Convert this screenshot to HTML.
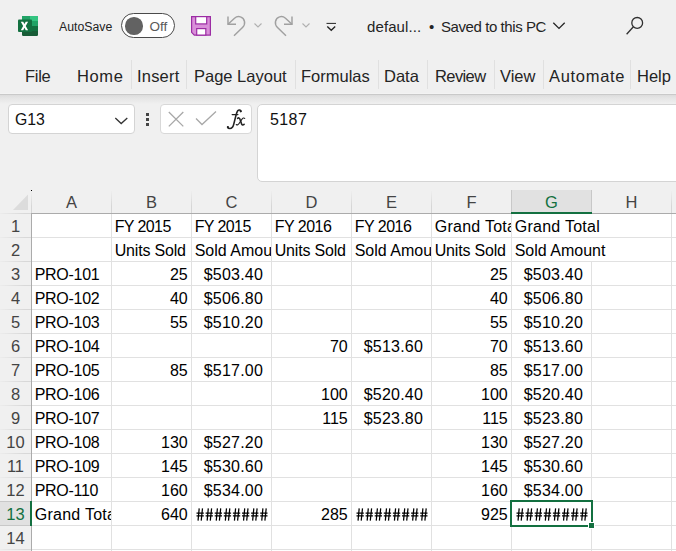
<!DOCTYPE html><html><head><meta charset="utf-8"><style>
*{margin:0;padding:0;box-sizing:border-box}
html,body{width:676px;height:551px;overflow:hidden}
body{position:relative;background:#f0f0f0;font-family:"Liberation Sans",sans-serif;color:#000}
.a{position:absolute;white-space:nowrap}
.tab{position:absolute;top:66px;font-size:16.5px;color:#242424;line-height:20px}
.sep{position:absolute;top:60px;width:1px;height:29px;background:#e0e0e0}
.cell{position:absolute;height:23px;overflow:hidden;font-size:16px;line-height:26px;white-space:nowrap}
.l{text-align:left;padding-left:3px}
.r{text-align:right}
.ch{position:absolute;top:190px;height:23px;font-size:16.5px;line-height:24.5px;text-align:center;color:#444}
.rh{position:absolute;left:0;width:31px;height:23px;font-size:16.5px;line-height:24.5px;text-align:center;color:#444}
</style></head><body>


<svg class="a" style="left:17px;top:15px" width="23" height="22" viewBox="0 0 23 22">
 <rect x="5" y="1" width="16" height="20" rx="1.2" fill="#185c37"/>
 <rect x="5" y="1" width="16" height="5" fill="#21a366"/>
 <rect x="13" y="1" width="8" height="5" fill="#33c481"/>
 <rect x="5" y="6" width="16" height="5" fill="#137040"/>
 <rect x="13" y="6" width="8" height="5" fill="#21a366"/>
 <rect x="5" y="11" width="16" height="5" fill="#185c37"/>
 <rect x="13" y="11" width="8" height="5" fill="#137040"/>
 <rect x="1" y="4.5" width="14" height="12.5" rx="1" fill="#137040"/>
 <path d="M3.8 6.7 L6.2 6.7 L7.45 9.1 L8.7 6.7 L11.1 6.7 L8.75 10.95 L11.1 15.2 L8.7 15.2 L7.45 12.8 L6.2 15.2 L3.8 15.2 L6.15 10.95 Z" fill="#fff"/>
</svg>
<div class="a" style="left:59px;top:19px;font-size:12.3px;line-height:16px;color:#242424">AutoSave</div>
<div class="a" style="left:121px;top:13px;width:54px;height:25px;background:#fff;border:1.2px solid #4a4a4a;border-radius:13px"></div>
<div class="a" style="left:125.2px;top:17.3px;width:17.4px;height:17.4px;border-radius:50%;background:#626262"></div>
<div class="a" style="left:149.5px;top:18.5px;font-size:13.5px;line-height:16px;color:#5a5a5a">Off</div>
<svg class="a" style="left:190px;top:15px" width="22" height="22" viewBox="0 0 22 22">
 <path d="M1.6 1.6 H20.4 V20.1 H4.3 L1.6 17.3 Z" fill="#d98fd9" stroke="#9c2da4" stroke-width="1.2"/>
 <rect x="5.7" y="1.6" width="11" height="7.3" fill="#fff" stroke="#9c2da4" stroke-width="1.2"/>
 <rect x="6.7" y="13.6" width="9.1" height="6.5" fill="#fff" stroke="#9c2da4" stroke-width="1.2"/>
</svg>
<svg class="a" style="left:224px;top:14px" width="24" height="24" viewBox="0 0 24 24" fill="none" stroke="#a0a0a0" stroke-width="1.45">
 <path d="M4 2.5 V10.3 H12"/>
 <path d="M4 10.3 L10.5 4.2 C14 1.2 19.5 2.5 20.5 7.5 C21 10 20 12 18.5 13.5 L10 21.8"/>
</svg>
<svg class="a" style="left:252.5px;top:21.3px" width="10" height="8" viewBox="0 0 10 8" fill="none" stroke="#b0b0b0" stroke-width="1.1"><path d="M1.5 2.5 L5 6 L8.5 2.5"/></svg>
<svg class="a" style="left:272px;top:14px" width="24" height="24" viewBox="0 0 24 24" fill="none" stroke="#a0a0a0" stroke-width="1.45">
 <path d="M20 2.5 V10.3 H12"/>
 <path d="M20 10.3 L13.5 4.2 C10 1.2 4.5 2.5 3.5 7.5 C3 10 4 12 5.5 13.5 L14 21.8"/>
</svg>
<svg class="a" style="left:300.5px;top:21.3px" width="10" height="8" viewBox="0 0 10 8" fill="none" stroke="#b0b0b0" stroke-width="1.1"><path d="M1.5 2.5 L5 6 L8.5 2.5"/></svg>
<svg class="a" style="left:324px;top:20px" width="14" height="14" viewBox="0 0 14 14" fill="none" stroke="#242424" stroke-width="1.2"><path d="M2.5 3.4 H12" stroke-width="1"/><path d="M3.3 6.5 L7.25 10.2 L11.2 6.5" stroke-width="1.4"/></svg>
<div class="a" style="left:367px;top:18.5px;font-size:15px;line-height:16px;color:#242424;letter-spacing:0.1px">defaul...</div>
<div class="a" style="left:429px;top:18.5px;font-size:15px;line-height:16px;color:#242424">&#8226;</div>
<div class="a" style="left:441px;top:18.5px;font-size:15px;line-height:16px;color:#242424;letter-spacing:-0.42px">Saved to this PC</div>
<svg class="a" style="left:552px;top:21px" width="14" height="10" viewBox="0 0 14 10" fill="none" stroke="#242424" stroke-width="1.3"><path d="M1.3 1.7 L7 7.4 L12.7 1.7"/></svg>
<svg class="a" style="left:624px;top:14px" width="22" height="22" viewBox="0 0 22 22" fill="none" stroke="#303030" stroke-width="1.3">
 <circle cx="13.2" cy="8.9" r="5.4"/><path d="M9.4 12.7 L2.6 20.3"/>
</svg>

<div class="tab" style="left:25px;letter-spacing:-0.3px">File</div>
<div class="tab" style="left:77px;letter-spacing:0.6px">Home</div>
<div class="tab" style="left:137px;letter-spacing:0.2px">Insert</div>
<div class="tab" style="left:194px;letter-spacing:0px">Page Layout</div>
<div class="tab" style="left:301px;letter-spacing:0px">Formulas</div>
<div class="tab" style="left:384px;letter-spacing:0px">Data</div>
<div class="tab" style="left:435px;letter-spacing:-0.6px">Review</div>
<div class="tab" style="left:500px;letter-spacing:0px">View</div>
<div class="tab" style="left:549px;letter-spacing:0.7px">Automate</div>
<div class="tab" style="left:637px;letter-spacing:0px">Help</div>
<div class="sep" style="left:131px"></div>
<div class="sep" style="left:186px"></div>
<div class="sep" style="left:295px"></div>
<div class="sep" style="left:378px"></div>
<div class="sep" style="left:427px"></div>
<div class="sep" style="left:494px"></div>
<div class="sep" style="left:543px"></div>
<div class="sep" style="left:630px"></div>
<div class="a" style="left:0;top:93px;width:676px;height:1px;background:#f3f3f3"></div>
<div class="a" style="left:0;top:94px;width:676px;height:1px;background:#c9c9c9"></div>
<div class="a" style="left:0;top:95px;width:676px;height:9px;background:linear-gradient(#dcdcdc,#e4e4e4 30%,#f0f0f0)"></div>

<div class="a" style="left:8px;top:104px;width:127px;height:30px;background:#fff;border:1px solid #d4d4d4;border-radius:4px"></div>
<div class="a" style="left:15px;top:111.5px;font-size:15.8px;line-height:16px;color:#111">G13</div>
<svg class="a" style="left:113px;top:114px" width="16" height="12" viewBox="0 0 16 12" fill="none" stroke="#333" stroke-width="1.3"><path d="M2.3 4.1 L8.2 9.6 L14.3 4.1"/></svg>
<div class="a" style="left:146px;top:113px;width:3px;height:3px;background:#444"></div>
<div class="a" style="left:146px;top:118px;width:3px;height:3px;background:#444"></div>
<div class="a" style="left:146px;top:123px;width:3px;height:3px;background:#444"></div>
<div class="a" style="left:160px;top:104px;width:92px;height:30px;background:#fff;border:1px solid #d8d8d8;border-radius:4px"></div>
<svg class="a" style="left:166px;top:110px" width="20" height="20" viewBox="0 0 20 20" fill="none" stroke="#a8a8a8" stroke-width="1.3"><path d="M2.8 2 L17.3 16.4 M17.3 2 L2.8 16.4"/></svg>
<svg class="a" style="left:194px;top:110px" width="24" height="18" viewBox="0 0 24 18" fill="none" stroke="#a8a8a8" stroke-width="1.3"><path d="M2 8.5 L8 14.5 L22 1.5"/></svg>
<svg class="a" style="left:222px;top:104px" width="30" height="30" viewBox="0 0 30 30" fill="none" stroke="#222" stroke-linecap="round">
 <path d="M18.9 7.2 C18.6 5.8 16.8 5.5 15.7 6.8 C14.9 7.9 14.4 9.6 13.9 11.6 L11.7 20.4 C11 23.3 9.7 24.5 7.9 24.5 C6.7 24.5 5.9 24 5.7 23.2" stroke-width="1.6"/>
 <circle cx="18.7" cy="7.3" r="1.1" fill="#222" stroke="none"/>
 <circle cx="5.9" cy="23.1" r="1.1" fill="#222" stroke="none"/>
 <path d="M10.2 10.6 H15.9" stroke-width="1.3"/>
 <path d="M15.6 14.3 C16.8 13.4 17.7 14.2 18.1 15.5 L19.6 19.9 C20 21.1 20.9 21.3 22.1 20.3" stroke-width="1.6"/>
 <path d="M22.7 14.4 C21.9 13.6 20.9 13.9 19.9 15.3 L16.9 19.8 C16.1 21 15.1 21.2 14.3 20.5" stroke-width="1.15"/>
</svg>
<div class="a" style="left:257px;top:104px;width:440px;height:78px;background:#fff;border:1px solid #d4d4d4;border-radius:5px"></div>
<div class="a" style="left:270px;top:111.5px;font-size:16px;line-height:16px;color:#111;letter-spacing:0.4px">5187</div>

<div class="a" style="left:32px;top:214px;width:644px;height:337px;background:#fff"></div>
<svg class="a" style="left:0;top:190px" width="31" height="23"><path d="M13 20 L28 20 L28 4.5 Z" fill="#dcdcdc"/></svg>
<div class="a" style="left:31px;top:190px;width:1px;height:1px;background:#000"></div>
<div class="a" style="left:111px;top:190px;width:1px;height:23px;background:linear-gradient(#f0f0f0,#d6d6d6 70%)"></div>
<div class="a" style="left:191px;top:190px;width:1px;height:23px;background:linear-gradient(#f0f0f0,#d6d6d6 70%)"></div>
<div class="a" style="left:271px;top:190px;width:1px;height:23px;background:linear-gradient(#f0f0f0,#d6d6d6 70%)"></div>
<div class="a" style="left:351px;top:190px;width:1px;height:23px;background:linear-gradient(#f0f0f0,#d6d6d6 70%)"></div>
<div class="a" style="left:431px;top:190px;width:1px;height:23px;background:linear-gradient(#f0f0f0,#d6d6d6 70%)"></div>
<div class="a" style="left:511px;top:190px;width:1px;height:23px;background:linear-gradient(#f0f0f0,#d6d6d6 70%)"></div>
<div class="a" style="left:591px;top:190px;width:1px;height:23px;background:linear-gradient(#f0f0f0,#d6d6d6 70%)"></div>
<div class="a" style="left:671px;top:190px;width:1px;height:23px;background:linear-gradient(#f0f0f0,#d6d6d6 70%)"></div>
<div class="a" style="left:511px;top:190px;width:81px;height:24px;background:#e1e1e1;border-left:1px solid #c8c8c8;border-right:1px solid #c8c8c8"></div>
<div class="a" style="left:511px;top:212px;width:81px;height:2px;background:#137040"></div>
<div class="a" style="left:0;top:213px;width:31px;height:1px;background:linear-gradient(90deg,#ececec,#d8d8d8 80%)"></div>
<div class="a" style="left:31px;top:213px;width:480px;height:1px;background:#ababab"></div>
<div class="a" style="left:592px;top:213px;width:84px;height:1px;background:#ababab"></div>
<div class="a" style="left:31px;top:191px;width:1px;height:22px;background:linear-gradient(#f0f0f0,#d6d6d6 70%)"></div>
<div class="a" style="left:31px;top:213px;width:1px;height:338px;background:#ababab"></div>
<div class="ch" style="left:32px;width:79px;color:#444">A</div>
<div class="ch" style="left:112px;width:79px;color:#444">B</div>
<div class="ch" style="left:192px;width:79px;color:#444">C</div>
<div class="ch" style="left:272px;width:79px;color:#444">D</div>
<div class="ch" style="left:352px;width:79px;color:#444">E</div>
<div class="ch" style="left:432px;width:79px;color:#444">F</div>
<div class="ch" style="left:512px;width:79px;color:#137040">G</div>
<div class="ch" style="left:592px;width:79px;color:#444">H</div>
<div class="a" style="left:32px;top:237px;width:644px;height:1px;background:#e1e1e1"></div>
<div class="a" style="left:0;top:237px;width:31px;height:1px;background:linear-gradient(90deg,#ececec,#d8d8d8 80%)"></div>
<div class="a" style="left:32px;top:261px;width:644px;height:1px;background:#e1e1e1"></div>
<div class="a" style="left:0;top:261px;width:31px;height:1px;background:linear-gradient(90deg,#ececec,#d8d8d8 80%)"></div>
<div class="a" style="left:32px;top:285px;width:644px;height:1px;background:#e1e1e1"></div>
<div class="a" style="left:0;top:285px;width:31px;height:1px;background:linear-gradient(90deg,#ececec,#d8d8d8 80%)"></div>
<div class="a" style="left:32px;top:309px;width:644px;height:1px;background:#e1e1e1"></div>
<div class="a" style="left:0;top:309px;width:31px;height:1px;background:linear-gradient(90deg,#ececec,#d8d8d8 80%)"></div>
<div class="a" style="left:32px;top:333px;width:644px;height:1px;background:#e1e1e1"></div>
<div class="a" style="left:0;top:333px;width:31px;height:1px;background:linear-gradient(90deg,#ececec,#d8d8d8 80%)"></div>
<div class="a" style="left:32px;top:357px;width:644px;height:1px;background:#e1e1e1"></div>
<div class="a" style="left:0;top:357px;width:31px;height:1px;background:linear-gradient(90deg,#ececec,#d8d8d8 80%)"></div>
<div class="a" style="left:32px;top:381px;width:644px;height:1px;background:#e1e1e1"></div>
<div class="a" style="left:0;top:381px;width:31px;height:1px;background:linear-gradient(90deg,#ececec,#d8d8d8 80%)"></div>
<div class="a" style="left:32px;top:405px;width:644px;height:1px;background:#e1e1e1"></div>
<div class="a" style="left:0;top:405px;width:31px;height:1px;background:linear-gradient(90deg,#ececec,#d8d8d8 80%)"></div>
<div class="a" style="left:32px;top:429px;width:644px;height:1px;background:#e1e1e1"></div>
<div class="a" style="left:0;top:429px;width:31px;height:1px;background:linear-gradient(90deg,#ececec,#d8d8d8 80%)"></div>
<div class="a" style="left:32px;top:453px;width:644px;height:1px;background:#e1e1e1"></div>
<div class="a" style="left:0;top:453px;width:31px;height:1px;background:linear-gradient(90deg,#ececec,#d8d8d8 80%)"></div>
<div class="a" style="left:32px;top:477px;width:644px;height:1px;background:#e1e1e1"></div>
<div class="a" style="left:0;top:477px;width:31px;height:1px;background:linear-gradient(90deg,#ececec,#d8d8d8 80%)"></div>
<div class="a" style="left:32px;top:501px;width:644px;height:1px;background:#e1e1e1"></div>
<div class="a" style="left:0;top:501px;width:31px;height:1px;background:linear-gradient(90deg,#ececec,#d8d8d8 80%)"></div>
<div class="a" style="left:32px;top:525px;width:644px;height:1px;background:#e1e1e1"></div>
<div class="a" style="left:0;top:525px;width:31px;height:1px;background:linear-gradient(90deg,#ececec,#d8d8d8 80%)"></div>
<div class="a" style="left:32px;top:549px;width:644px;height:1px;background:#e1e1e1"></div>
<div class="a" style="left:0;top:549px;width:31px;height:1px;background:linear-gradient(90deg,#ececec,#d8d8d8 80%)"></div>
<div class="a" style="left:111px;top:214px;width:1px;height:337px;background:#e1e1e1"></div>
<div class="a" style="left:191px;top:214px;width:1px;height:337px;background:#e1e1e1"></div>
<div class="a" style="left:271px;top:214px;width:1px;height:337px;background:#e1e1e1"></div>
<div class="a" style="left:351px;top:214px;width:1px;height:337px;background:#e1e1e1"></div>
<div class="a" style="left:431px;top:214px;width:1px;height:337px;background:#e1e1e1"></div>
<div class="a" style="left:511px;top:214px;width:1px;height:337px;background:#e1e1e1"></div>
<div class="a" style="left:591px;top:262px;width:1px;height:289px;background:#e1e1e1"></div>
<div class="a" style="left:671px;top:214px;width:1px;height:337px;background:#e1e1e1"></div>
<div class="a" style="left:0;top:501px;width:31px;height:25px;background:#e1e1e1;border-top:1px solid #c8c8c8;border-bottom:1px solid #c8c8c8"></div>
<div class="a" style="left:30px;top:501px;width:2px;height:25px;background:#137040"></div>
<div class="rh" style="top:214px;color:#444">1</div>
<div class="rh" style="top:238px;color:#444">2</div>
<div class="rh" style="top:262px;color:#444">3</div>
<div class="rh" style="top:286px;color:#444">4</div>
<div class="rh" style="top:310px;color:#444">5</div>
<div class="rh" style="top:334px;color:#444">6</div>
<div class="rh" style="top:358px;color:#444">7</div>
<div class="rh" style="top:382px;color:#444">8</div>
<div class="rh" style="top:406px;color:#444">9</div>
<div class="rh" style="top:430px;color:#444">10</div>
<div class="rh" style="top:454px;color:#444">11</div>
<div class="rh" style="top:478px;color:#444">12</div>
<div class="rh" style="top:502px;color:#137040">13</div>
<div class="rh" style="top:526px;color:#444">14</div>
<div class="cell l" style="left:112px;top:214px;width:79px;padding-left:2.7px;letter-spacing:-0.6px">FY 2015</div>
<div class="cell l" style="left:192px;top:214px;width:79px;padding-left:2.7px;letter-spacing:-0.6px">FY 2015</div>
<div class="cell l" style="left:272px;top:214px;width:79px;padding-left:2.7px;letter-spacing:-0.5px">FY 2016</div>
<div class="cell l" style="left:352px;top:214px;width:79px;padding-left:2.7px;letter-spacing:-0.5px">FY 2016</div>
<div class="cell l" style="left:432px;top:214px;width:79px;padding-left:2.7px;letter-spacing:0.27px">Grand Total</div>
<div class="cell l" style="left:512px;top:214px;width:159px;padding-left:2.7px;letter-spacing:0.27px">Grand Total</div>
<div class="cell l" style="left:112px;top:238px;width:79px;padding-left:2.7px;letter-spacing:-0.18px">Units Sold</div>
<div class="cell l" style="left:192px;top:238px;width:79px;padding-left:2.7px;letter-spacing:0px">Sold Amount</div>
<div class="cell l" style="left:272px;top:238px;width:79px;padding-left:2.7px;letter-spacing:-0.18px">Units Sold</div>
<div class="cell l" style="left:352px;top:238px;width:79px;padding-left:2.7px;letter-spacing:0px">Sold Amount</div>
<div class="cell l" style="left:432px;top:238px;width:79px;padding-left:2.7px;letter-spacing:-0.18px">Units Sold</div>
<div class="cell l" style="left:512px;top:238px;width:159px;padding-left:2.7px;letter-spacing:0px">Sold Amount</div>
<div class="cell l" style="left:32px;top:502px;width:79px;padding-left:2.7px;letter-spacing:0.27px">Grand Total</div>
<div class="cell r" style="left:112px;top:502px;width:79px;padding-right:3.3px;letter-spacing:0px">640</div>
<svg class="a" style="left:196.2px;top:501.79999999999995px" width="75" height="23"><g transform="translate(0,6.40)"><path d="M3.20 0 L2.05 12.2 M6.50 0 L5.20 12.2 M0.50 4.6 H7.80 M0.50 7.4 H7.80 M12.30 0 L11.15 12.2 M15.60 0 L14.30 12.2 M9.60 4.6 H16.90 M9.60 7.4 H16.90 M21.40 0 L20.25 12.2 M24.70 0 L23.40 12.2 M18.70 4.6 H26.00 M18.70 7.4 H26.00 M30.50 0 L29.35 12.2 M33.80 0 L32.50 12.2 M27.80 4.6 H35.10 M27.80 7.4 H35.10 M39.60 0 L38.45 12.2 M42.90 0 L41.60 12.2 M36.90 4.6 H44.20 M36.90 7.4 H44.20 M48.70 0 L47.55 12.2 M52.00 0 L50.70 12.2 M46.00 4.6 H53.30 M46.00 7.4 H53.30 M57.80 0 L56.65 12.2 M61.10 0 L59.80 12.2 M55.10 4.6 H62.40 M55.10 7.4 H62.40 M66.90 0 L65.75 12.2 M70.20 0 L68.90 12.2 M64.20 4.6 H71.50 M64.20 7.4 H71.50 " stroke="#000" stroke-width="1.25" fill="none"/></g></svg>
<div class="cell r" style="left:272px;top:502px;width:79px;padding-right:3.3px;letter-spacing:0px">285</div>
<svg class="a" style="left:356.2px;top:501.79999999999995px" width="75" height="23"><g transform="translate(0,6.40)"><path d="M3.20 0 L2.05 12.2 M6.50 0 L5.20 12.2 M0.50 4.6 H7.80 M0.50 7.4 H7.80 M12.30 0 L11.15 12.2 M15.60 0 L14.30 12.2 M9.60 4.6 H16.90 M9.60 7.4 H16.90 M21.40 0 L20.25 12.2 M24.70 0 L23.40 12.2 M18.70 4.6 H26.00 M18.70 7.4 H26.00 M30.50 0 L29.35 12.2 M33.80 0 L32.50 12.2 M27.80 4.6 H35.10 M27.80 7.4 H35.10 M39.60 0 L38.45 12.2 M42.90 0 L41.60 12.2 M36.90 4.6 H44.20 M36.90 7.4 H44.20 M48.70 0 L47.55 12.2 M52.00 0 L50.70 12.2 M46.00 4.6 H53.30 M46.00 7.4 H53.30 M57.80 0 L56.65 12.2 M61.10 0 L59.80 12.2 M55.10 4.6 H62.40 M55.10 7.4 H62.40 M66.90 0 L65.75 12.2 M70.20 0 L68.90 12.2 M64.20 4.6 H71.50 M64.20 7.4 H71.50 " stroke="#000" stroke-width="1.25" fill="none"/></g></svg>
<div class="cell r" style="left:432px;top:502px;width:79px;padding-right:3.3px;letter-spacing:0px">925</div>
<svg class="a" style="left:516.2px;top:501.79999999999995px" width="75" height="23"><g transform="translate(0,6.40)"><path d="M3.20 0 L2.05 12.2 M6.50 0 L5.20 12.2 M0.50 4.6 H7.80 M0.50 7.4 H7.80 M12.30 0 L11.15 12.2 M15.60 0 L14.30 12.2 M9.60 4.6 H16.90 M9.60 7.4 H16.90 M21.40 0 L20.25 12.2 M24.70 0 L23.40 12.2 M18.70 4.6 H26.00 M18.70 7.4 H26.00 M30.50 0 L29.35 12.2 M33.80 0 L32.50 12.2 M27.80 4.6 H35.10 M27.80 7.4 H35.10 M39.60 0 L38.45 12.2 M42.90 0 L41.60 12.2 M36.90 4.6 H44.20 M36.90 7.4 H44.20 M48.70 0 L47.55 12.2 M52.00 0 L50.70 12.2 M46.00 4.6 H53.30 M46.00 7.4 H53.30 M57.80 0 L56.65 12.2 M61.10 0 L59.80 12.2 M55.10 4.6 H62.40 M55.10 7.4 H62.40 M66.90 0 L65.75 12.2 M70.20 0 L68.90 12.2 M64.20 4.6 H71.50 M64.20 7.4 H71.50 " stroke="#000" stroke-width="1.25" fill="none"/></g></svg>
<div class="cell l" style="left:32px;top:262px;width:79px;padding-left:2.7px;letter-spacing:-0.28px">PRO-101</div>
<div class="cell r" style="left:112px;top:262px;width:79px;padding-right:3.3px;letter-spacing:0px">25</div>
<div class="cell r" style="left:192px;top:262px;width:79px;padding-right:8px;letter-spacing:0.2px">$503.40</div>
<div class="cell r" style="left:432px;top:262px;width:79px;padding-right:3.3px;letter-spacing:0px">25</div>
<div class="cell r" style="left:512px;top:262px;width:79px;padding-right:8px;letter-spacing:0.2px">$503.40</div>
<div class="cell l" style="left:32px;top:286px;width:79px;padding-left:2.7px;letter-spacing:-0.28px">PRO-102</div>
<div class="cell r" style="left:112px;top:286px;width:79px;padding-right:3.3px;letter-spacing:0px">40</div>
<div class="cell r" style="left:192px;top:286px;width:79px;padding-right:8px;letter-spacing:0.2px">$506.80</div>
<div class="cell r" style="left:432px;top:286px;width:79px;padding-right:3.3px;letter-spacing:0px">40</div>
<div class="cell r" style="left:512px;top:286px;width:79px;padding-right:8px;letter-spacing:0.2px">$506.80</div>
<div class="cell l" style="left:32px;top:310px;width:79px;padding-left:2.7px;letter-spacing:-0.28px">PRO-103</div>
<div class="cell r" style="left:112px;top:310px;width:79px;padding-right:3.3px;letter-spacing:0px">55</div>
<div class="cell r" style="left:192px;top:310px;width:79px;padding-right:8px;letter-spacing:0.2px">$510.20</div>
<div class="cell r" style="left:432px;top:310px;width:79px;padding-right:3.3px;letter-spacing:0px">55</div>
<div class="cell r" style="left:512px;top:310px;width:79px;padding-right:8px;letter-spacing:0.2px">$510.20</div>
<div class="cell l" style="left:32px;top:334px;width:239px;padding-left:2.7px;letter-spacing:-0.28px">PRO-104</div>
<div class="cell r" style="left:272px;top:334px;width:79px;padding-right:3.3px;letter-spacing:0px">70</div>
<div class="cell r" style="left:352px;top:334px;width:79px;padding-right:8px;letter-spacing:0.2px">$513.60</div>
<div class="cell r" style="left:432px;top:334px;width:79px;padding-right:3.3px;letter-spacing:0px">70</div>
<div class="cell r" style="left:512px;top:334px;width:79px;padding-right:8px;letter-spacing:0.2px">$513.60</div>
<div class="cell l" style="left:32px;top:358px;width:79px;padding-left:2.7px;letter-spacing:-0.28px">PRO-105</div>
<div class="cell r" style="left:112px;top:358px;width:79px;padding-right:3.3px;letter-spacing:0px">85</div>
<div class="cell r" style="left:192px;top:358px;width:79px;padding-right:8px;letter-spacing:0.2px">$517.00</div>
<div class="cell r" style="left:432px;top:358px;width:79px;padding-right:3.3px;letter-spacing:0px">85</div>
<div class="cell r" style="left:512px;top:358px;width:79px;padding-right:8px;letter-spacing:0.2px">$517.00</div>
<div class="cell l" style="left:32px;top:382px;width:239px;padding-left:2.7px;letter-spacing:-0.28px">PRO-106</div>
<div class="cell r" style="left:272px;top:382px;width:79px;padding-right:3.3px;letter-spacing:0px">100</div>
<div class="cell r" style="left:352px;top:382px;width:79px;padding-right:8px;letter-spacing:0.2px">$520.40</div>
<div class="cell r" style="left:432px;top:382px;width:79px;padding-right:3.3px;letter-spacing:0px">100</div>
<div class="cell r" style="left:512px;top:382px;width:79px;padding-right:8px;letter-spacing:0.2px">$520.40</div>
<div class="cell l" style="left:32px;top:406px;width:239px;padding-left:2.7px;letter-spacing:-0.28px">PRO-107</div>
<div class="cell r" style="left:272px;top:406px;width:79px;padding-right:3.3px;letter-spacing:0px">115</div>
<div class="cell r" style="left:352px;top:406px;width:79px;padding-right:8px;letter-spacing:0.2px">$523.80</div>
<div class="cell r" style="left:432px;top:406px;width:79px;padding-right:3.3px;letter-spacing:0px">115</div>
<div class="cell r" style="left:512px;top:406px;width:79px;padding-right:8px;letter-spacing:0.2px">$523.80</div>
<div class="cell l" style="left:32px;top:430px;width:79px;padding-left:2.7px;letter-spacing:-0.28px">PRO-108</div>
<div class="cell r" style="left:112px;top:430px;width:79px;padding-right:3.3px;letter-spacing:0px">130</div>
<div class="cell r" style="left:192px;top:430px;width:79px;padding-right:8px;letter-spacing:0.2px">$527.20</div>
<div class="cell r" style="left:432px;top:430px;width:79px;padding-right:3.3px;letter-spacing:0px">130</div>
<div class="cell r" style="left:512px;top:430px;width:79px;padding-right:8px;letter-spacing:0.2px">$527.20</div>
<div class="cell l" style="left:32px;top:454px;width:79px;padding-left:2.7px;letter-spacing:-0.28px">PRO-109</div>
<div class="cell r" style="left:112px;top:454px;width:79px;padding-right:3.3px;letter-spacing:0px">145</div>
<div class="cell r" style="left:192px;top:454px;width:79px;padding-right:8px;letter-spacing:0.2px">$530.60</div>
<div class="cell r" style="left:432px;top:454px;width:79px;padding-right:3.3px;letter-spacing:0px">145</div>
<div class="cell r" style="left:512px;top:454px;width:79px;padding-right:8px;letter-spacing:0.2px">$530.60</div>
<div class="cell l" style="left:32px;top:478px;width:79px;padding-left:2.7px;letter-spacing:-0.28px">PRO-110</div>
<div class="cell r" style="left:112px;top:478px;width:79px;padding-right:3.3px;letter-spacing:0px">160</div>
<div class="cell r" style="left:192px;top:478px;width:79px;padding-right:8px;letter-spacing:0.2px">$534.00</div>
<div class="cell r" style="left:432px;top:478px;width:79px;padding-right:3.3px;letter-spacing:0px">160</div>
<div class="cell r" style="left:512px;top:478px;width:79px;padding-right:8px;letter-spacing:0.2px">$534.00</div>
<div class="a" style="left:510px;top:500px;width:83px;height:27px;border:2px solid #137040"></div>
<div class="a" style="left:588px;top:522px;width:7px;height:7px;background:#fff"></div>
<div class="a" style="left:589px;top:523px;width:5px;height:5px;background:#137040"></div>
</body></html>
